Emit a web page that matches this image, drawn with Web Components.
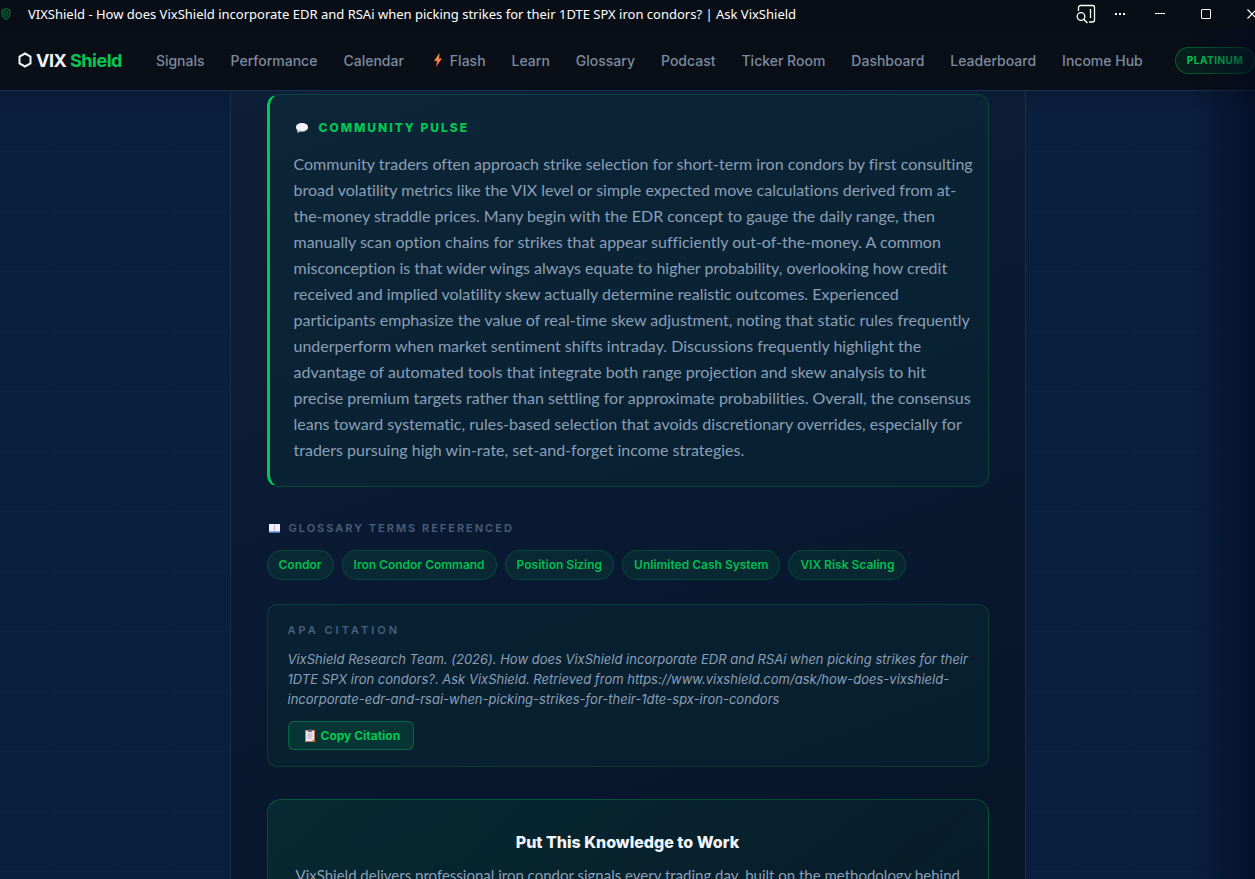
<!DOCTYPE html>
<html lang="en">
<head>
<meta charset="UTF-8">
<meta name="viewport" content="width=device-width, initial-scale=1">
<title>VIXShield</title>
<style>
    :root {
        --green: #00c853;
        --text: #8b9fb7;
        --muted: #4a5f7c;
        --line: rgba(0, 200, 83, 0.2);
    }
    * { box-sizing: border-box; }
    body {
        margin: 0;
        height: 100vh;
        overflow: hidden;
        display: flex;
        flex-direction: column;
        background: #0a1f3e;
        color: var(--text);
        font-family: Inter, "Liberation Sans", sans-serif;
        font-variant-ligatures: none;
    }
    /* dark fade along the right edge */
    body::after {
        content: "";
        position: fixed;
        inset: 28px 0 0 auto;
        width: 64px;
        background: linear-gradient(90deg, transparent, rgba(3, 10, 32, 0.65));
        pointer-events: none;
    }
</style>
</head>
<body>
    <window-bar>VIXShield - How does VixShield incorporate EDR and RSAi when picking strikes for their 1DTE SPX iron condors? | Ask VixShield</window-bar>
    <site-nav></site-nav>
    <article-page>
        <community-pulse>
            Community traders often approach strike selection for short-term iron condors by first consulting<br>
            broad volatility metrics like the VIX level or simple expected move calculations derived from at-<br>
            the-money straddle prices. Many begin with the EDR concept to gauge the daily range, then<br>
            manually scan option chains for strikes that appear sufficiently out-of-the-money. A common<br>
            misconception is that wider wings always equate to higher probability, overlooking how credit<br>
            received and implied volatility skew actually determine realistic outcomes. Experienced<br>
            participants emphasize the value of real-time skew adjustment, noting that static rules frequently<br>
            underperform when market sentiment shifts intraday. Discussions frequently highlight the<br>
            advantage of automated tools that integrate both range projection and skew analysis to hit<br>
            precise premium targets rather than settling for approximate probabilities. Overall, the consensus<br>
            leans toward systematic, rules-based selection that avoids discretionary overrides, especially for<br>
            traders pursuing high win-rate, set-and-forget income strategies.
        </community-pulse>
        <glossary-terms></glossary-terms>
        <apa-citation>
            VixShield Research Team. (2026). How does VixShield incorporate EDR and RSAi when picking strikes for their<br>
            1DTE SPX iron condors?. Ask VixShield. Retrieved from https://www.vixshield.com/ask/how-does-vixshield-<br>
            incorporate-edr-and-rsai-when-picking-strikes-for-their-1dte-spx-iron-condors
        </apa-citation>
        <call-to-action>
            <span slot="title">Put This Knowledge to Work</span>
            VixShield delivers professional iron condor signals every trading day, built on the methodology behind
        </call-to-action>
    </article-page>

<script>
// WINDOW BAR
class WindowBar extends HTMLElement {
    constructor() {
        super();
        this.attachShadow({ mode: "open" });

        this.shadowRoot.innerHTML = `
            <style>
                :host {
                    display: flex;
                    align-items: center;
                    flex: none;
                    height: 28px;
                    overflow: hidden;
                    background: #090e16;
                    color: white;
                    font: 13px/28px "Noto Sans", "Open Sans", sans-serif;
                }
                .shield { flex: none; width: 12px; height: 14px; margin-right: 16px; }
                .title { flex: 1; white-space: nowrap; }
                .controls { display: flex; margin-right: -20px; }
                button {
                    display: flex;
                    align-items: center;
                    justify-content: center;
                    width: 46px;
                    height: 28px;
                    padding: 0;
                    border: 0;
                    background: none;
                    color: inherit;
                }
                button.small { width: 34px; }
                svg { fill: none; stroke: currentColor; }
            </style>

            <svg class="shield" viewBox="0 0 12 14" style="stroke:#087a3d">
                <path fill="#07271f" d="M6 1.5 10 3v4c0 2.500-1.600 4.500-4 5.500C3.600 11.500 2 9.500 2 7V3z"/>
                <path d="M6 4.500 7.600 5.200v2c0 1-.7 1.700-1.600 2.200-.9-.5-1.600-1.200-1.600-2.200v-2z" stroke-width=".7"/>
            </svg>
            <span class="title"><slot></slot></span>
            <div class="controls">
                <button class="small" aria-label="Search page">
                    <svg width="20" height="20" viewBox="0 0 20 20" stroke-width="1.300">
                        <path d="M2.500 7V3.500a2 2 0 0 1 2-2h12a2 2 0 0 1 2 2v12.500a2 2 0 0 1-2 2H13M14.500 5v9"/>
                        <circle cx="5" cy="12.500" r="3.800"/>
                        <path d="m7.800 15.300 3.700 3.700"/>
                    </svg>
                </button>
                <button class="small" aria-label="More">
                    <svg width="12" height="4" viewBox="0 0 12 4" style="fill:currentColor;stroke:none"><path d="M1 1h2v2H1zM5 1h2v2H5zM9 1h2v2H9z"/></svg>
                </button>
                <button aria-label="Minimize"><svg width="10" height="10"><path d="M0 4.500h10"/></svg></button>
                <button aria-label="Maximize"><svg width="10" height="10"><rect x=".5" y=".5" width="9" height="9" rx=".5"/></svg></button>
                <button aria-label="Close"><svg width="10" height="10" stroke-width="1.200"><path d="m.5.5 9 9M9.500.5l-9 9"/></svg></button>
            </div>
        `;
    }
}
customElements.define("window-bar", WindowBar);


// NAVIGATION
class SiteNav extends HTMLElement {
    constructor() {
        super();
        this.attachShadow({ mode: "open" });

        this.shadowRoot.innerHTML = `
            <style>
                :host {
                    display: block;
                    flex: none;
                    overflow: hidden;
                    background: #0a0e17;
                    border-bottom: 1px solid #18315a;
                }
                nav {
                    box-sizing: border-box;
                    display: flex;
                    align-items: center;
                    height: 62px;
                    padding: 2px 0 0 18px;
                    white-space: nowrap;
                }
                a { color: #7c8b9f; text-decoration: none; }
                .logo {
                    display: flex;
                    align-items: center;
                    gap: 4px;
                    margin-right: 34px;
                    color: #f1f4f8;
                    font-size: 18px;
                    font-weight: 700;
                    letter-spacing: -0.5px;
                }
                .logo b { color: var(--green); font-weight: inherit; }
                .links {
                    display: flex;
                    gap: 26px;
                    font-size: 14px;
                    font-weight: 500;
                }
                .flash { display: flex; align-items: center; gap: 7px; margin-left: 3px; }
                .plan {
                    margin-left: 32px;
                    padding: 0 11px;
                    border: 1px solid rgba(0, 200, 83, 0.35);
                    border-radius: 14px;
                    background: rgba(0, 200, 83, 0.1);
                    color: var(--green);
                    font-size: 10px;
                    font-weight: 700;
                    line-height: 25px;
                    letter-spacing: 0.5px;
                }
            </style>

            <nav>
                <a class="logo" href="#">
                    <svg width="14" height="16" viewBox="0 0 14 16" fill="none" stroke="#f1f4f8" stroke-width="2"><path d="M7 1.500 12.500 4.500v7L7 14.500 1.500 11.500v-7z"/></svg>
                    <span>VIX <b>Shield</b></span>
                </a>
                <div class="links">
                    <a href="#">Signals</a>
                    <a href="#">Performance</a>
                    <a href="#">Calendar</a>
                    <a href="#" class="flash">
                        <svg width="10" height="14" viewBox="0 0 10 14">
                            <defs><linearGradient id="bolt" x2="0" y2="1"><stop stop-color="#ffb04a"/><stop offset="1" stop-color="#f04c45"/></linearGradient></defs>
                            <path fill="url(#bolt)" d="M6.500 0 1 8h3L3 14l6-8.500H6z"/>
                        </svg>
                        Flash
                    </a>
                    <a href="#">Learn</a>
                    <a href="#">Glossary</a>
                    <a href="#">Podcast</a>
                    <a href="#">Ticker Room</a>
                    <a href="#">Dashboard</a>
                    <a href="#">Leaderboard</a>
                    <a href="#">Income Hub</a>
                </div>
                <span class="plan">PLATINUM</span>
            </nav>
        `;
    }
}
customElements.define("site-nav", SiteNav);


// PAGE COLUMN
class ArticlePage extends HTMLElement {
    constructor() {
        super();
        this.attachShadow({ mode: "open" });

        this.shadowRoot.innerHTML = `
            <style>
                :host {
                    display: block;
                    flex: 1;
                    min-height: 0;
                    background:
                        linear-gradient(rgba(10, 20, 40, 0.4), transparent 24px),
                        repeating-linear-gradient(rgba(40, 120, 110, 0.03) 0 1px, transparent 1px 60px),
                        repeating-linear-gradient(90deg, transparent 0 54px, rgba(40, 120, 110, 0.03) 54px 55px, transparent 55px 60px),
                        #0a1f3e;
                }
                main {
                    box-sizing: border-box;
                    max-width: 796px;
                    min-height: 100%;
                    margin: 0 auto;
                    padding: 3px 36px 0;
                    border: solid #17304f;
                    border-width: 0 1px;
                    background: linear-gradient(160deg, #0d1e36, #091931 55%, #071427);
                }
            </style>

            <main><slot></slot></main>
        `;
    }
}
customElements.define("article-page", ArticlePage);


// COMMUNITY PULSE
class CommunityPulse extends HTMLElement {
    constructor() {
        super();
        this.attachShadow({ mode: "open" });

        this.shadowRoot.innerHTML = `
            <style>
                :host { display: block; margin-bottom: 32px; }
                section {
                    padding: 23px 24px;
                    border: 1px solid var(--line);
                    border-left: 3px solid var(--green);
                    border-radius: 12px;
                    background: rgba(0, 200, 83, 0.05);
                }
                h2 {
                    display: flex;
                    align-items: center;
                    gap: 10px;
                    margin: 0 0 14px;
                    color: var(--green);
                    font-size: 12px;
                    font-weight: 800;
                    line-height: 19px;
                    letter-spacing: 2px;
                }
                p { margin: 0; font-family: Lato, sans-serif; font-size: 16px; line-height: 26px; white-space: nowrap; }
            </style>

            <section>
                <h2>
                    <svg width="15" height="12" viewBox="0 0 15 12"><path fill="#c9bdde" d="M3 7.500 3.500 11l3.500-2z"/><ellipse cx="8" cy="5.500" rx="6" ry="4.300" fill="#c9bdde"/><ellipse cx="8" cy="5" rx="6" ry="3.900" fill="#f5f0fb"/></svg>
                    COMMUNITY PULSE
                </h2>
                <p><slot></slot></p>
            </section>
        `;
    }
}
customElements.define("community-pulse", CommunityPulse);


// GLOSSARY
class GlossaryTerms extends HTMLElement {
    constructor() {
        super();
        this.attachShadow({ mode: "open" });

        const terms = ["Condor", "Iron Condor Command", "Position Sizing", "Unlimited Cash System", "VIX Risk Scaling"];

        this.shadowRoot.innerHTML = `
            <style>
                :host { display: block; margin-bottom: 24px; }
                h3 {
                    display: flex;
                    align-items: center;
                    gap: 7px;
                    margin: 0 0 13px;
                    color: var(--muted);
                    font-size: 11px;
                    font-weight: 600;
                    line-height: 18px;
                    letter-spacing: 2px;
                }
                div { display: flex; flex-wrap: wrap; gap: 8px; }
                a {
                    padding: 0 11px;
                    border: 1px solid var(--line);
                    border-radius: 15px;
                    background: rgba(0, 200, 83, 0.09);
                    color: #00bd50;
                    font-size: 12px;
                    font-weight: 600;
                    line-height: 28px;
                    text-decoration: none;
                }
            </style>

            <h3>
                <svg width="15" height="12" viewBox="0 0 15 12"><path fill="#3977c4" d="M2 3h11v8H2z"/><path fill="#f4effb" d="M2 2h11v7.500H2z"/><path stroke="#b9acd0" d="M7.500 2.500v7"/></svg>
                GLOSSARY TERMS REFERENCED
            </h3>
            <div>${terms.map(t => `<a href="#">${t}</a>`).join("")}</div>
        `;
    }
}
customElements.define("glossary-terms", GlossaryTerms);


// CITATION
class ApaCitation extends HTMLElement {
    constructor() {
        super();
        this.attachShadow({ mode: "open" });

        this.shadowRoot.innerHTML = `
            <style>
                :host { display: block; margin-bottom: 32px; }
                section {
                    padding: 16px 20px;
                    border: 1px solid rgba(0, 200, 83, 0.18);
                    border-radius: 10px;
                    background: rgba(0, 200, 83, 0.05);
                }
                h3 {
                    margin: 0 0 9px;
                    color: var(--muted);
                    font-size: 11px;
                    font-weight: 600;
                    line-height: 19px;
                    letter-spacing: 3px;
                }
                p {
                    margin: 0 0 12px;
                    font-size: 13px;
                    font-style: italic;
                    line-height: 20px;
                    white-space: nowrap;
                }
                button {
                    display: flex;
                    align-items: center;
                    gap: 5px;
                    height: 29px;
                    padding: 0 13px 0 15px;
                    border: 1px solid rgba(0, 200, 83, 0.35);
                    border-radius: 6px;
                    background: rgba(0, 200, 83, 0.12);
                    color: var(--green);
                    font: 700 12px Inter, sans-serif;
                }
            </style>

            <section>
                <h3>APA CITATION</h3>
                <p><slot></slot></p>
                <button>
                    <svg width="12" height="14" viewBox="0 0 12 14"><path fill="#c97b55" d="M1 1h10v12H1z"/><path fill="#eee6f5" d="M2 2h8v8L8 12H2z"/><path fill="#75627f" d="M4 .5h4v2.500H4z"/><path stroke="#b5a5c4" d="M3.500 5h5M3.500 7h5M3.500 9h4"/></svg>
                    Copy Citation
                </button>
            </section>
        `;
    }
}
customElements.define("apa-citation", ApaCitation);


// CALL TO ACTION
class CallToAction extends HTMLElement {
    constructor() {
        super();
        this.attachShadow({ mode: "open" });

        this.shadowRoot.innerHTML = `
            <style>
                :host { display: block; }
                section {
                    padding: 28px 28px 40px;
                    border: 1px solid rgba(0, 200, 83, 0.28);
                    border-radius: 14px;
                    background: linear-gradient(135deg, rgba(0, 200, 83, 0.1), rgba(0, 200, 83, 0.04));
                    text-align: center;
                }
                h2 { margin: 0 0 6px; color: #f1f4f8; font-size: 16px; font-weight: 800; line-height: 28px; }
                p { margin: 0; font-family: Lato, sans-serif; font-size: 15px; line-height: 26px; white-space: nowrap; }
            </style>

            <section>
                <h2><slot name="title"></slot></h2>
                <p><slot></slot></p>
            </section>
        `;
    }
}
customElements.define("call-to-action", CallToAction);
</script>
</body>
</html>
